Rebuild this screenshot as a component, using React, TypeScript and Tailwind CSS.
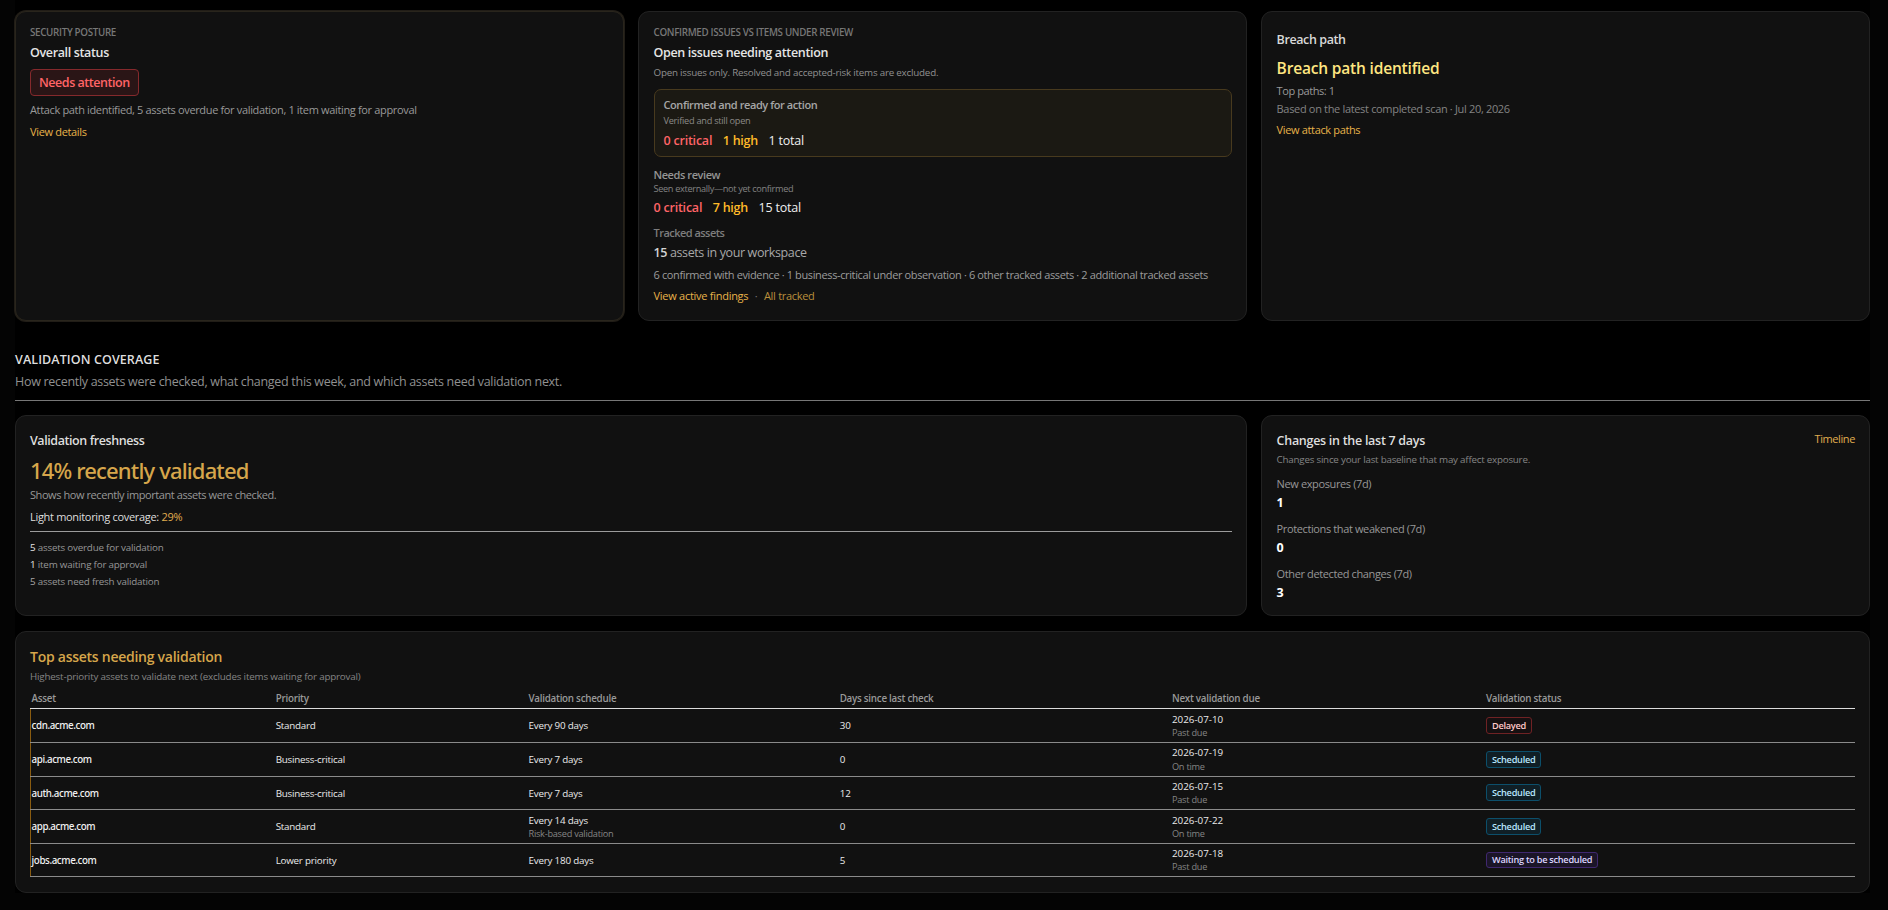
import type { ReactNode } from "react";
import clsx from "clsx";

const sizes = {
  micro: "text-[9.2px] leading-[13px]",
  xs: "text-[9.8px] leading-[13px]",
  sm: "text-[11px] leading-[15px]",
  base: "text-[12.5px] leading-[17px]",
  md: "text-[14px] leading-[19px]",
  lg: "text-[15.5px] leading-[22px]",
  xl: "text-[22px] leading-[31px]",
};

function Text({ size, className, children }: { size: keyof typeof sizes; className?: string; children: ReactNode }) {
  return <p className={clsx("whitespace-nowrap", sizes[size], className)}>{children}</p>;
}

function Card({ className, children }: { className?: string; children: ReactNode }) {
  return <section className={clsx("rounded-[11px] border bg-[#111111] pr-3.5", className)}>{children}</section>;
}

function Counts({ critical, high, total, className }: { critical: number; high: number; total: number; className?: string }) {
  return (
    <div className={clsx("flex gap-[10.5px] text-[12.5px] leading-[17px] tracking-[-0.22px]", className)}>
      <span className="font-semibold text-[#ff6467]">{critical} critical</span>
      <span className="font-semibold text-[#ffbb29]">{high} high</span>
      <span className="text-[#efefef]">{total} total</span>
    </div>
  );
}

function PostureCard() {
  return (
    <Card className="border-[#29251c] pt-3.5 pl-3.5 shadow-[0_0_0_1px_#211d17]">
      <Text size="xs" className="font-semibold tracking-[-0.32px] text-[#777777]">SECURITY POSTURE</Text>
      <Text size="base" className="mt-[5px] font-semibold tracking-[-0.35px] text-[#e5e5e5]">Overall status</Text>
      <div className="mt-2 flex">
        <span className="rounded-[4px] border border-[#85292c] bg-[#2a1516] px-2 py-1 text-[12.5px] leading-[17px] font-semibold tracking-[-0.46px] text-[#ff6467]">
          Needs attention
        </span>
      </div>
      <Text size="sm" className="mt-1.5 tracking-[-0.345px] text-[#999999]">
        Attack path identified, 5 assets overdue for validation, 1 item waiting for approval
      </Text>
      <Text size="sm" className="mt-[7px] tracking-[-0.33px] text-[#e8b34a]"><a>View details</a></Text>
    </Card>
  );
}

function IssuesCard() {
  return (
    <Card className="border-[#222222] pt-3.5 pl-[14.5px]">
      <Text size="xs" className="font-semibold tracking-[-0.32px] text-[#777777]">CONFIRMED ISSUES VS ITEMS UNDER REVIEW</Text>
      <Text size="base" className="mt-[5px] font-semibold tracking-[-0.33px] text-[#e5e5e5]">Open issues needing attention</Text>
      <Text size="xs" className="mt-[5px] tracking-[-0.215px] text-[#909090]">
        Open issues only. Resolved and accepted-risk items are excluded.
      </Text>
      <div className="mt-2.5 h-[68px] rounded-[7px] border border-[#483a1e] bg-[#1b1913] px-[9px] pt-[7px]">
        <Text size="sm" className="font-semibold tracking-[-0.42px] text-[#a6a6a6]">Confirmed and ready for action</Text>
        <Text size="micro" className="mt-0.5 tracking-[-0.26px] text-[#8b8a87]">Verified and still open</Text>
        <Counts critical={0} high={1} total={1} className="mt-[5px]" />
      </div>
      <Text size="sm" className="mt-2.5 font-semibold tracking-[-0.42px] text-[#949494]">Needs review</Text>
      <Text size="micro" className="tracking-[-0.34px] text-[#838383]">Seen externally—not yet confirmed</Text>
      <Counts critical={0} high={7} total={15} className="mt-1" />
      <Text size="sm" className="mt-[9px] font-semibold tracking-[-0.53px] text-[#7d7d7d]">Tracked assets</Text>
      <Text size="base" className="mt-1 tracking-[-0.38px] text-[#a8a8a8]">
        <span className="font-semibold text-[#d4d4d4]">15</span> assets in your workspace
      </Text>
      <Text size="sm" className="mt-1.5 tracking-[-0.374px] text-[#9c9c9c]">
        6 confirmed with evidence · 1 business-critical under observation · 6 other tracked assets · 2 additional tracked assets
      </Text>
      <div className="mt-1.5 flex text-[11px] leading-[15px] whitespace-nowrap">
        <a className="tracking-[-0.27px] text-[#e8b34a]">View active findings</a>
        <span className="px-[6.4px] text-[#757575]">·</span>
        <a className="tracking-[-0.3px] text-[#ba8f3c]">All tracked</a>
      </div>
    </Card>
  );
}

function BreachCard() {
  return (
    <Card className="border-[#222222] pt-[19px] pl-[14.6px]">
      <Text size="base" className="font-semibold tracking-[-0.4px] text-[#d9d9d9]">Breach path</Text>
      <Text size="lg" className="mt-[9px] font-semibold tracking-[-0.175px] text-[#ffe681]">Breach path identified</Text>
      <Text size="sm" className="mt-1 tracking-[-0.42px] text-[#999999]">Top paths: 1</Text>
      <Text size="sm" className="mt-[3px] tracking-[-0.33px] text-[#838383]">Based on the latest completed scan · Jul 20, 2026</Text>
      <Text size="sm" className="mt-1.5 tracking-[-0.35px] text-[#e8b34a]"><a>View attack paths</a></Text>
    </Card>
  );
}

const backlog = [
  { count: 5, label: "assets overdue for validation", tone: "text-[#e5e5e5]", gap: "mt-[9px]" },
  { count: 1, label: "item waiting for approval", tone: "text-[#e5e5e5]", gap: "mt-1" },
  { count: 5, label: "assets need fresh validation", tone: "text-[#a6a6a6]", gap: "mt-1" },
];

function FreshnessCard() {
  return (
    <Card className="border-[#222222] pt-4 pl-3.5">
      <Text size="base" className="font-semibold tracking-[-0.42px] text-[#dedede]">Validation freshness</Text>
      <Text size="xl" className="mt-1.5 font-['Noto_Sans'] font-medium tracking-[-0.84px] text-[#d6a64b]">14% recently validated</Text>
      <Text size="sm" className="mt-px tracking-[-0.425px] text-[#989898]">Shows how recently important assets were checked.</Text>
      <Text size="sm" className="mt-[7px] tracking-[-0.31px] text-[#dedede]">
        Light monitoring coverage: <span className="text-[#e0ae4f]">29%</span>
      </Text>
      <div className="mt-[7px] border-t border-[#9c9c9c]">
        {backlog.map((item) => (
          <Text key={item.label} size="xs" className={clsx("tracking-[-0.2px] text-[#979797]", item.gap)}>
            <span className={item.tone}>{item.count}</span> {item.label}
          </Text>
        ))}
      </div>
    </Card>
  );
}

const changes = [
  { label: "New exposures (7d)", value: 1 },
  { label: "Protections that weakened (7d)", value: 0 },
  { label: "Other detected changes (7d)", value: 3 },
];

function ChangesCard() {
  return (
    <Card className="border-[#222222] pt-[15px] pl-[14.6px]">
      <div className="flex items-start justify-between">
        <Text size="base" className="pt-px font-semibold tracking-[-0.28px] text-[#dedede]">Changes in the last 7 days</Text>
        <Text size="sm" className="tracking-[-0.4px] text-[#e0ae4f]"><a>Timeline</a></Text>
      </div>
      <Text size="xs" className="mt-1 tracking-[-0.228px] text-[#858585]">Changes since your last baseline that may affect exposure.</Text>
      {changes.map((change) => (
        <div key={change.label} className="mt-2.5">
          <Text size="sm" className="tracking-[-0.38px] text-[#979797]">{change.label}</Text>
          <Text size="base" className="mt-[3px] font-bold text-white">{change.value}</Text>
        </div>
      ))}
    </Card>
  );
}

const columns = ["Asset", "Priority", "Validation schedule", "Days since last check", "Next validation due", "Validation status"];
const grid = "grid grid-cols-[245.7px_252.8px_311.2px_332.3px_314px_1fr]";

const delayed = "border-[#6f2224] bg-[#151011] py-px text-[#ffc9c9]";
const scheduled = "border-[#0c4f6b] bg-[#101f26] py-px text-[#b8e6fe]";
const waiting = "border-[#40286f] bg-[#1b1528] pb-px text-[#ddd6ff]";

const rows = [
  { asset: "cdn.acme.com", priority: "Standard", every: "Every 90 days", days: 30, due: "2026-07-10", note: "Past due", status: "Delayed", tone: delayed, height: "h-[34px]", duePad: "pt-1", noteGap: "", badgePad: "pt-2" },
  { asset: "api.acme.com", priority: "Business-critical", every: "Every 7 days", days: 0, due: "2026-07-19", note: "On time", status: "Scheduled", tone: scheduled, height: "h-[34px]", duePad: "pt-[3px]", noteGap: "mt-px", badgePad: "pt-2" },
  { asset: "auth.acme.com", priority: "Business-critical", every: "Every 7 days", days: 12, due: "2026-07-15", note: "Past due", status: "Scheduled", tone: scheduled, height: "h-[33px]", duePad: "pt-[3px]", noteGap: "", badgePad: "pt-[7px]" },
  { asset: "app.acme.com", priority: "Standard", every: "Every 14 days", reason: "Risk-based validation", days: 0, due: "2026-07-22", note: "On time", status: "Scheduled", tone: scheduled, height: "h-[34px]", duePad: "pt-1", noteGap: "", badgePad: "pt-2" },
  { asset: "jobs.acme.com", priority: "Lower priority", every: "Every 180 days", days: 5, due: "2026-07-18", note: "Past due", status: "Waiting to be scheduled", tone: waiting, height: "h-[33px]", duePad: "pt-[3px]", noteGap: "", badgePad: "pt-2" },
];

function AssetsCard() {
  return (
    <Card className="mt-[15px] h-[262px] border-[#222222] pt-[15px] pl-3.5">
      <Text size="md" className="font-semibold tracking-[-0.26px] text-[#d6a64b]">Top assets needing validation</Text>
      <Text size="xs" className="mt-1 tracking-[-0.182px] text-[#858585]">
        Highest-priority assets to validate next (excludes items waiting for approval)
      </Text>
      <div className={clsx(grid, "mt-[9px] border-b border-[#dcdcdc] pb-[3px]")}>
        {columns.map((column, i) => (
          <Text key={column} size="xs" className={clsx("font-semibold tracking-[-0.25px] text-[#999999]", i === 0 && "pl-[1.6px]")}>
            {column}
          </Text>
        ))}
      </div>
      {rows.map((row) => (
        <div key={row.asset} className={clsx(grid, "items-center border-b border-[#8b8b8b]", row.height)}>
          <div className="flex h-full items-center border-l border-[#8a5c10] pl-[0.6px]">
            <Text size="xs" className="font-['Noto_Sans'] font-medium tracking-[-0.41px] text-[#f0f0f0]">{row.asset}</Text>
          </div>
          <Text size="xs" className="tracking-[-0.23px] text-[#eaeaea]">{row.priority}</Text>
          {row.reason ? (
            <div className="self-start pt-1">
              <Text size="xs" className="tracking-[-0.2px] text-[#eaeaea]">{row.every}</Text>
              <Text size="micro" className="tracking-[-0.25px] text-[#858585]">{row.reason}</Text>
            </div>
          ) : (
            <Text size="xs" className="tracking-[-0.2px] text-[#eaeaea]">{row.every}</Text>
          )}
          <Text size="xs" className="text-[#eaeaea]">{row.days}</Text>
          <div className={clsx("self-start", row.duePad)}>
            <Text size="xs" className="text-[#eaeaea]">{row.due}</Text>
            <Text size="micro" className={clsx("tracking-[-0.25px] text-[#858585]", row.noteGap)}>{row.note}</Text>
          </div>
          <div className={clsx("flex self-start", row.badgePad)}>
            <span className={clsx("rounded-[3px] border px-[5px] text-[9.2px] leading-[13px] font-semibold tracking-[-0.27px] whitespace-nowrap", row.tone)}>
              {row.status}
            </span>
          </div>
        </div>
      ))}
    </Card>
  );
}

export default function App() {
  return (
    <div className="h-[910px] overflow-hidden bg-[#040404] pr-[18px] pl-[15px] font-['Open_Sans','Noto_Sans',sans-serif]">
      <main className="bg-black pt-[11px]">
        <div className="grid h-[310px] grid-cols-3 gap-3.5">
          <PostureCard />
          <IssuesCard />
          <BreachCard />
        </div>
        <header className="mt-[30px] border-b border-[#777777] pb-2.5">
          <h2 className="text-[12.5px] leading-[17px] font-semibold tracking-[0.1px] text-[#dedede]">VALIDATION COVERAGE</h2>
          <Text size="base" className="mt-[5px] tracking-[-0.302px] text-[#909090]">
            How recently assets were checked, what changed this week, and which assets need validation next.
          </Text>
        </header>
        <div className="mt-3.5 grid h-[201px] grid-cols-[1232px_609px] gap-3.5">
          <FreshnessCard />
          <ChangesCard />
        </div>
        <AssetsCard />
      </main>
    </div>
  );
}
